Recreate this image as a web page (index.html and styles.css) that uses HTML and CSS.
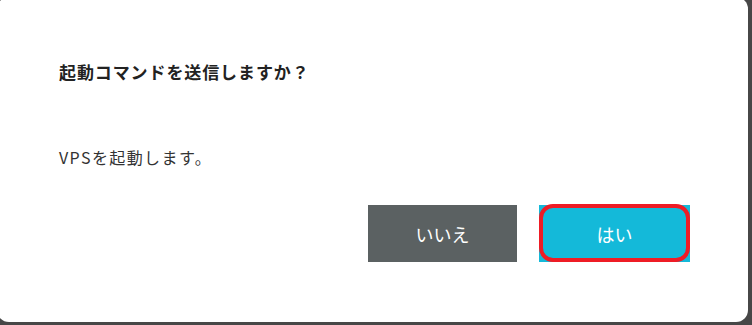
FILE: index.html
```html
<!DOCTYPE html>
<html lang="ja">
<head>
<meta charset="utf-8">
<link rel="stylesheet" href="styles.css">
</head>
<body>
<div class="dialog">
  <h2 class="title">起動コマンドを送信しますか？</h2>
  <p class="message">VPSを起動します。</p>
  <div class="actions">
    <button class="btn btn-no">いいえ</button>
    <button class="btn btn-yes">はい<span class="highlight"></span></button>
  </div>
</div>
</body>
</html>
```
FILE: styles.css
```css
html, body {
  margin: 0;
  padding: 0;
  background: #474747;
  width: 752px;
  height: 325px;
  overflow: hidden;
}
.dialog {
  box-sizing: border-box;
  margin: -3px 0 0 -3px;
  width: 751px;
  height: 325px;
  background: #ffffff;
  border-radius: 12px;
  padding: 0 58px 0 62px;
  display: flex;
  flex-direction: column;
  font-family: "Noto Sans CJK JP", "Noto Sans", sans-serif;
}
.title {
  margin: 63px 0 0 0;
  font-size: 17px;
  letter-spacing: 0.9px;
  line-height: 24px;
  font-weight: bold;
  color: #222222;
}
.message {
  margin: 62px 0 0 0;
  font-size: 16px;
  letter-spacing: 1.4px;
  line-height: 22px;
  color: #333333;
}
.actions {
  display: flex;
  justify-content: flex-end;
  gap: 22px;
  margin-top: 37px;
}
.btn {
  position: relative;
  width: 149px;
  height: 57px;
  border: none;
  border-radius: 0;
  padding: 0;
  font-family: "Noto Sans CJK JP", "Noto Sans", sans-serif;
  font-size: 18px;
  color: #ffffff;
  cursor: pointer;
}
.btn-no {
  background: #5b6162;
}
.btn-yes {
  width: 151px;
  background: #14b9d9;
}
.highlight {
  position: absolute;
  left: 0;
  top: -1px;
  right: 0;
  bottom: 0;
  border: 4px solid #ee1c25;
  border-radius: 14px;
}
```
